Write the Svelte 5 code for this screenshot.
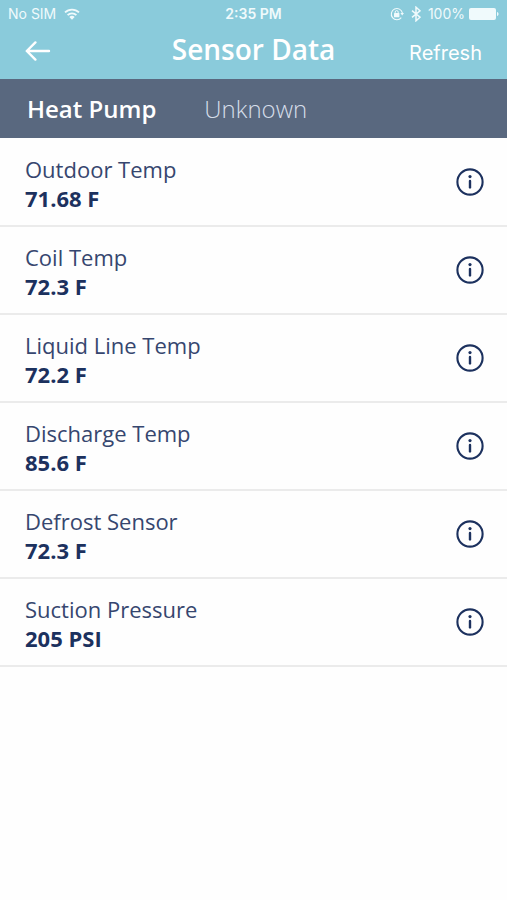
<script lang="ts">
  type Reading = { name: string; value: string };

  const tabs = ['Heat Pump', 'Unknown'];

  const readings: Reading[] = [
    { name: 'Outdoor Temp', value: '71.68 F' },
    { name: 'Coil Temp', value: '72.3 F' },
    { name: 'Liquid Line Temp', value: '72.2 F' },
    { name: 'Discharge Temp', value: '85.6 F' },
    { name: 'Defrost Sensor', value: '72.3 F' },
    { name: 'Suction Pressure', value: '205 PSI' },
  ];

  let activeTab = $state('Heat Pump');
</script>

<div class="screen">
  <header>
    <div class="status-bar">
      <div class="status-left">
        <span>No SIM</span>
        <svg width="16" height="12" viewBox="0 0 16 12" fill="none" stroke="currentColor" stroke-width="1.8">
          <path d="M1 4.4a10 10 0 0 1 14 0" />
          <path d="M3.6 7.2a6.2 6.2 0 0 1 8.8 0" />
          <path d="M8 11.8 5.3 9.1a3.8 3.8 0 0 1 5.4 0z" fill="currentColor" stroke="none" />
        </svg>
      </div>
      <span class="clock">2:35 PM</span>
      <div class="status-right">
        <svg width="14" height="14" viewBox="0 0 14 14" fill="none" stroke="currentColor">
          <path d="M11.3 10.6A5.6 5.6 0 1 1 12.4 6" stroke-width="1.1" />
          <path d="M10.4 6h3.6l-1.8 2.6z" fill="currentColor" stroke="none" />
          <rect x="4" y="6" width="5.4" height="4.2" rx="0.5" fill="currentColor" stroke="none" />
          <path d="M5.2 6.4V5.1a1.5 1.5 0 0 1 3 0v1.3" stroke-width="1" />
        </svg>
        <svg class="bluetooth" width="10" height="16" viewBox="0 0 10 16" fill="none" stroke="currentColor" stroke-width="1.5">
          <path d="M1 4.6l8 6.6-4 3.6V1.2l4 3.6-8 6.6" />
        </svg>
        <span>100%</span>
        <svg width="30" height="12" viewBox="0 0 30 12" fill="currentColor">
          <rect x="0" y="0" width="27" height="12" rx="2" />
          <path d="M28 4c2 .5 2 3.5 0 4z" />
        </svg>
      </div>
    </div>
    <div class="nav-bar">
      <button class="back" aria-label="Back">
        <svg width="26" height="20" viewBox="0 0 26 20" fill="none" stroke="currentColor" stroke-width="2.4" stroke-linecap="round" stroke-linejoin="round">
          <path d="M24 10H1.8M10.4 1.4 1.8 10l8.6 8.6" />
        </svg>
      </button>
      <h1>Sensor Data</h1>
      <button class="refresh">Refresh</button>
    </div>
  </header>

  <nav class="tabs">
    {#each tabs as tab}
      <button class:active={tab === activeTab} onclick={() => (activeTab = tab)}>{tab}</button>
    {/each}
  </nav>

  <ul class="readings">
    {#each readings as reading}
      <li>
        <div class="text">
          <span class="name">{reading.name}</span>
          <strong class="value">{reading.value}</strong>
        </div>
        <button class="info" aria-label="About {reading.name}">
          <svg width="28" height="28" viewBox="0 0 28 28" fill="none" stroke="currentColor">
            <circle cx="14" cy="14" r="12.6" stroke-width="2.1" />
            <path d="M14 13v6.4" stroke-width="2.4" stroke-linecap="round" />
            <circle cx="14" cy="8.6" r="1.6" fill="currentColor" stroke="none" />
          </svg>
        </button>
      </li>
    {/each}
  </ul>
</div>

<style>
  :global(body) {
    margin: 0;
    background: #fefefe;
  }

  .screen {
    font-family: 'Open Sans', sans-serif;
    color: #1c315e;
  }

  button {
    background: none;
    border: none;
    padding: 0;
    font: inherit;
    color: inherit;
    cursor: pointer;
  }

  svg {
    display: block;
  }

  header {
    background: #8acbdb;
    color: #fff;
    padding-bottom: 8px;
  }

  .status-bar {
    display: grid;
    grid-template-columns: 1fr auto 1fr;
    align-items: center;
    height: 27px;
    padding: 0 8px;
    font-family: Inter, sans-serif;
    font-size: 14px;
    color: #f0fafc;
  }

  .status-left,
  .status-right {
    display: flex;
    align-items: center;
    gap: 8px;
  }

  .status-right {
    justify-content: flex-end;
    gap: 4px;
  }

  .bluetooth {
    margin: 0 3px;
  }

  .clock {
    font-weight: 600;
  }

  .nav-bar {
    display: grid;
    grid-template-columns: 1fr auto 1fr;
    align-items: center;
    height: 44px;
    padding: 0 25px;
  }

  .back {
    justify-self: start;
    padding-top: 4px;
  }

  h1 {
    margin: 0;
    font-size: 28px;
    line-height: 44px;
    font-weight: 600;
  }

  .refresh {
    justify-self: end;
    padding-top: 8px;
    font-family: Inter, sans-serif;
    font-size: 20px;
  }

  .tabs {
    display: flex;
    gap: 48px;
    height: 59px;
    padding: 0 27px;
    background: #59687f;
    font-size: 24px;
    color: #d5dde9;
  }

  .tabs button {
    font-weight: 300;
  }

  .tabs button.active {
    font-weight: 600;
    color: #fff;
  }

  .readings {
    list-style: none;
    margin: 0;
    padding: 1px 0 0;
  }

  li {
    display: flex;
    align-items: center;
    justify-content: space-between;
    padding: 12px 23px 12px 25px;
    border-bottom: 2px solid #ebebeb;
  }

  .text {
    display: flex;
    flex-direction: column;
    padding-top: 4px;
    font-size: 22px;
    line-height: 29px;
  }

  .name {
    color: #36466f;
  }

  .value {
    font-weight: 700;
  }
</style>
